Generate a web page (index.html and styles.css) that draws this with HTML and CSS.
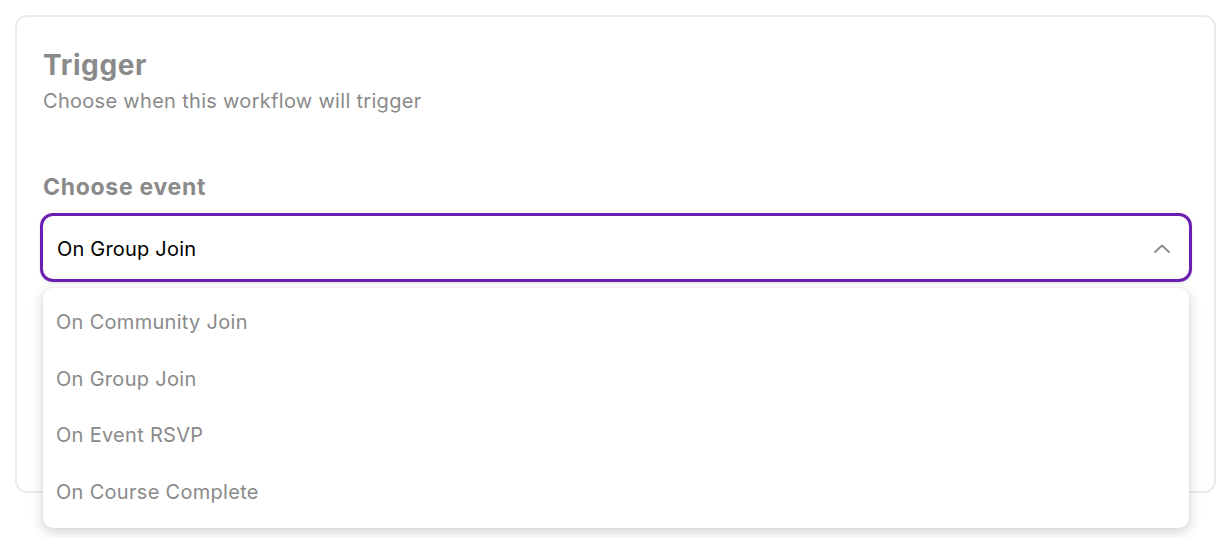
FILE: index.html
```html
<!DOCTYPE html>
<html lang="en">
<head>
	<meta charset="UTF-8">
	<title>Trigger</title>
	<link rel="stylesheet" href="styles.css">
</head>
<body>
	<div class="card">
		<h2 class="card-title">Trigger</h2>
		<p class="card-sub">Choose when this workflow will trigger</p>

		<label class="field-label">Choose event</label>
		<div class="select-wrap">
			<div class="select open">
				<span>On Group Join</span>
				<svg class="chevron" width="16" height="9" viewBox="0 0 16 9">
					<path d="M1 8L8 1.5L15 8" fill="none" stroke="#8a8a8a" stroke-width="1.8" stroke-linecap="round" stroke-linejoin="round"/>
				</svg>
			</div>
			<ul class="menu">
				<li>On Community Join</li>
				<li>On Group Join</li>
				<li>On Event RSVP</li>
				<li>On Course Complete</li>
			</ul>
		</div>
	</div>
</body>
</html>
```

FILE: styles.css
```css
html,body{margin:0;background:#fff;}
html{height:100%;}
body{min-height:100%;box-sizing:border-box;padding:15px 12px 0 15px;font-family:Inter,"Noto Sans",sans-serif;}
.card{height:474px;border:2px solid #ebebeb;border-radius:12px;padding:0 22px 0 23px;box-sizing:content-box;}
.card-title{margin:31px 0 0 3px;font-size:28px;line-height:34px;font-weight:700;color:#8a8a8a;letter-spacing:0.6px;}
.card-sub{margin:6px 0 0 3px;font-size:20px;line-height:26px;color:#8a8a8a;letter-spacing:0.3px;}
.field-label{display:block;margin:59px 0 0 3px;font-size:23px;line-height:28px;font-weight:700;color:#8a8a8a;letter-spacing:0.7px;}
.select-wrap{position:relative;margin-top:12px;}
.select{display:flex;align-items:center;justify-content:space-between;height:63px;padding:2px 19px 0 14px;box-sizing:content-box;border:3px solid #6a1fb0;border-radius:13px;box-shadow:0 1px 3px rgba(0,0,0,.12), inset 0 -6px 8px -6px rgba(0,0,0,.06);font-size:20px;letter-spacing:0.2px;color:#000;}
.select{height:61px;}
.chevron{display:block;}
ul{list-style:none;padding:0;margin:0;}
.menu{position:absolute;left:3px;right:3px;top:75px;height:240px;padding-top:6px;box-sizing:border-box;background:#fff;border-radius:10px;box-shadow:0 4px 14px rgba(0,0,0,.18),0 0 2px rgba(0,0,0,.08);}
.menu li{height:56.5px;line-height:56.5px;padding-left:13px;font-size:20px;letter-spacing:0.3px;color:#8a8a8a;}
```
